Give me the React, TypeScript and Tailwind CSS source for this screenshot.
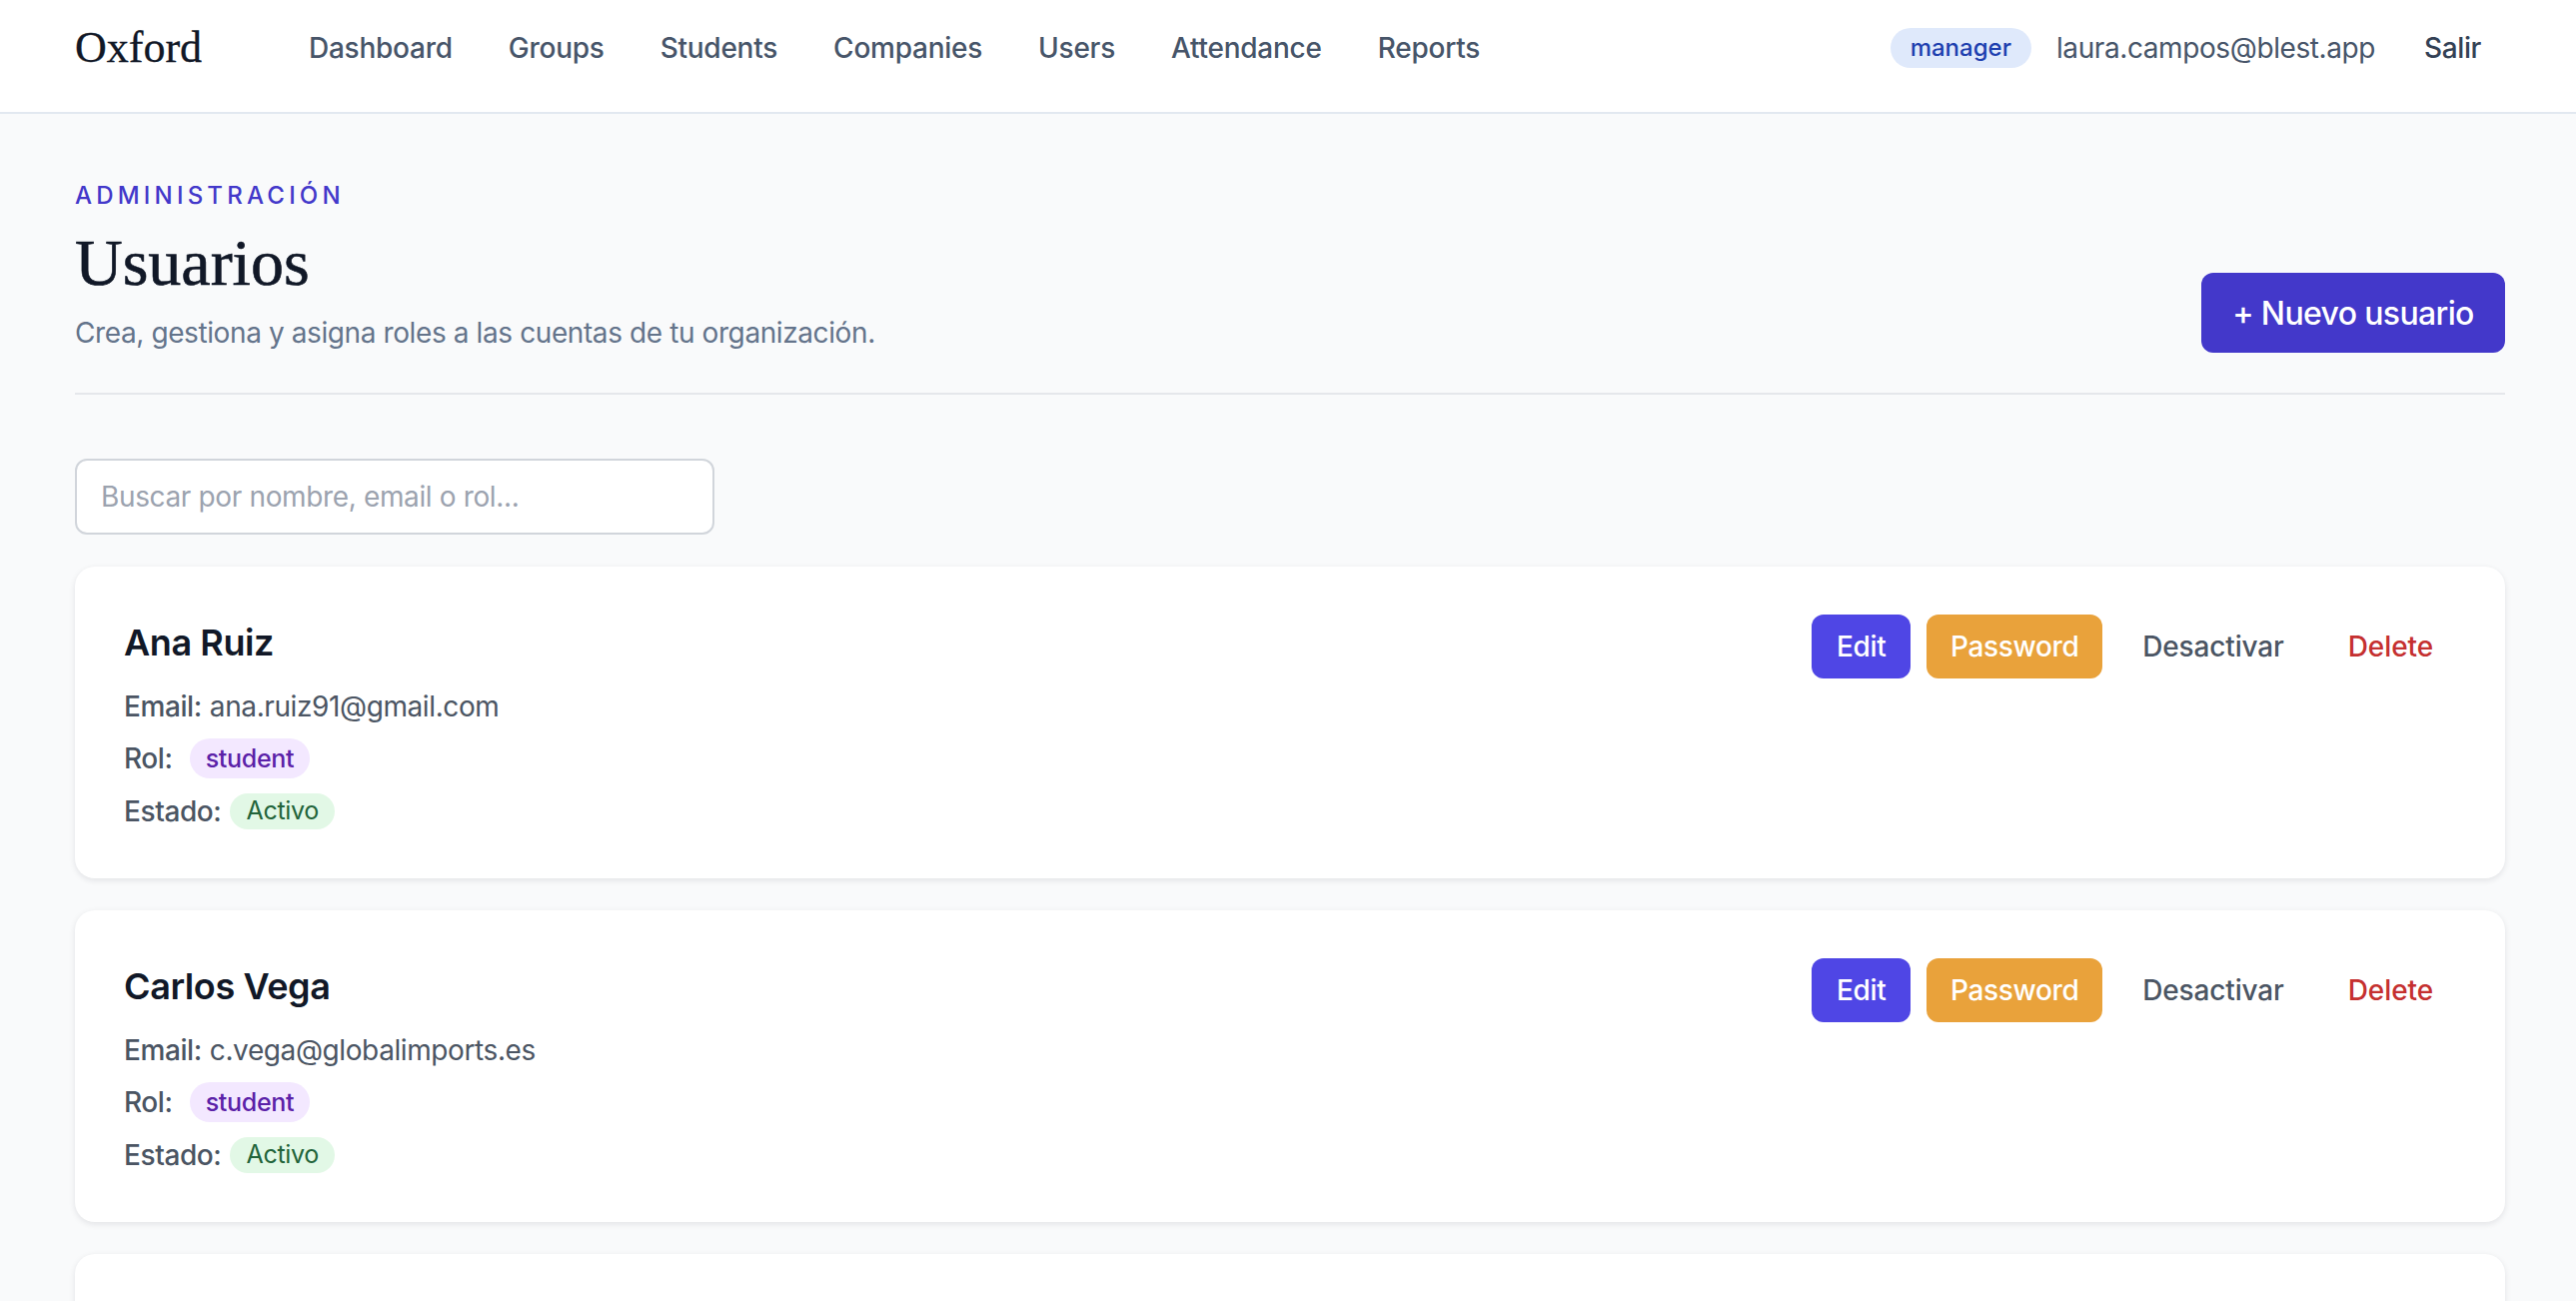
const navItems = ["Dashboard", "Groups", "Students", "Companies", "Users", "Attendance", "Reports"];

const users = [
  { name: "Ana Ruiz", email: "ana.ruiz91@gmail.com" },
  { name: "Carlos Vega", email: "c.vega@globalimports.es" },
];

function UserCard({ name, email }: { name: string; email: string }) {
  return (
    <div className="flex h-[312px] shrink-0 items-start justify-between rounded-[20px] bg-white pt-[48px] pr-[48px] pl-[49px] shadow-[0_2px_6px_rgba(15,23,42,0.1)]">
      <div className="text-[28px] tracking-[-0.4px] text-[#4b5563]">
        <div className="mb-[16px] flex h-[56px] items-center text-[36px] font-semibold text-[#111827]">{name}</div>
        <div className="mb-[12px] flex h-[40px] items-center">
          <span className="font-medium">Email:</span>
          <span className="ml-[8px]">{email}</span>
        </div>
        <div className="mb-[13px] flex h-[40px] items-center">
          <span className="font-medium">Rol:</span>
          <span className="ml-[17px] flex h-[40px] items-center rounded-full bg-[#f3e8ff] px-[16px] pt-[1px] text-[25px] font-medium tracking-[-0.3px] text-[#5b21a8]">student</span>
        </div>
        <div className="flex h-[40px] items-center">
          <span className="font-medium">Estado:</span>
          <span className="ml-[9px] flex h-[36px] items-center rounded-full bg-[#e2f8e6] px-[16px] text-[25px] tracking-[-0.3px] text-[#22643a]">Activo</span>
        </div>
      </div>
      <div className="flex items-center gap-[16px] text-[28px] font-medium tracking-[-0.35px]">
        <button className="flex h-[64px] w-[99px] items-center justify-center rounded-[12px] bg-[#4f46e5] text-white">Edit</button>
        <button className="flex h-[64px] w-[176px] items-center justify-center rounded-[12px] bg-[#e9a23b] text-white">Password</button>
        <button className="flex h-[64px] items-center px-[24px] tracking-[-0.15px] text-[#4b5563]">Desactivar</button>
        <button className="flex h-[64px] items-center px-[24px] tracking-[-0.1px] text-[#c53030]">Delete</button>
      </div>
    </div>
  );
}

export default function App() {
  return (
    <div className="flex h-screen flex-col overflow-hidden bg-[#f9fafb] font-['Inter',sans-serif]">
      <header className="flex h-[114px] shrink-0 items-center justify-between border-b-2 border-[#e2e8f0] bg-white pr-[95px] pb-[16px] pl-[75px]">
        <div className="flex items-center">
          <span className="w-[234px] font-['Liberation_Serif',serif] text-[44px] text-[#111827] [-webkit-text-stroke:0.3px_#111827]">Oxford</span>
          <nav className="flex items-center gap-[56px] text-[28px] font-medium tracking-[-0.25px] text-[#475569]">
            {navItems.map((item) => (
              <a key={item}>{item}</a>
            ))}
          </nav>
        </div>
        <div className="flex items-center text-[28px]">
          <span className="flex h-[40px] items-center rounded-full bg-[#dfe9fb] px-[20px] text-[24px] font-medium text-[#1e40af]">manager</span>
          <span className="ml-[25px] tracking-[-0.4px] text-[#475569]">laura.campos@blest.app</span>
          <span className="ml-[49px] font-medium tracking-[-0.4px] text-[#334155]">Salir</span>
        </div>
      </header>
      <main className="flex flex-col pt-[64px] pr-[71px] pl-[75px]">
        <div className="flex items-end justify-between border-b-2 border-[#e5e7eb] pb-[40px]">
          <div>
            <div className="text-[24px] font-medium leading-[36px] tracking-[4.2px] text-[#4338ca]">ADMINISTRACIÓN</div>
            <h1 className="mt-[13px] font-['Liberation_Serif',serif] text-[66px] leading-[72px] text-[#111827] [-webkit-text-stroke:0.6px_#111827]">Usuarios</h1>
            <p className="mt-[14px] text-[28px] leading-[40px] tracking-[-0.4px] text-[#64748b]">Crea, gestiona y asigna roles a las cuentas de tu organización.</p>
          </div>
          <button className="flex h-[80px] w-[304px] items-center justify-center rounded-[12px] bg-[#4338ca] pt-[1px] text-[32px] font-medium tracking-[-0.65px] text-white">+ Nuevo usuario</button>
        </div>
        <input
          placeholder="Buscar por nombre, email o rol..."
          className="mt-[64px] h-[76px] w-[640px] shrink-0 rounded-[12px] border-2 border-[#d1d5db] bg-white px-[24px] text-[28px] tracking-[-0.36px] text-[#111827] outline-none placeholder:text-[#9ca3af]"
        />
        <div className="mt-[32px] flex flex-col gap-[32px]">
          {users.map((u) => (
            <UserCard key={u.name} {...u} />
          ))}
          <div className="h-[312px] shrink-0 rounded-[20px] bg-white shadow-[0_2px_6px_rgba(15,23,42,0.1)]" />
        </div>
      </main>
    </div>
  );
}
